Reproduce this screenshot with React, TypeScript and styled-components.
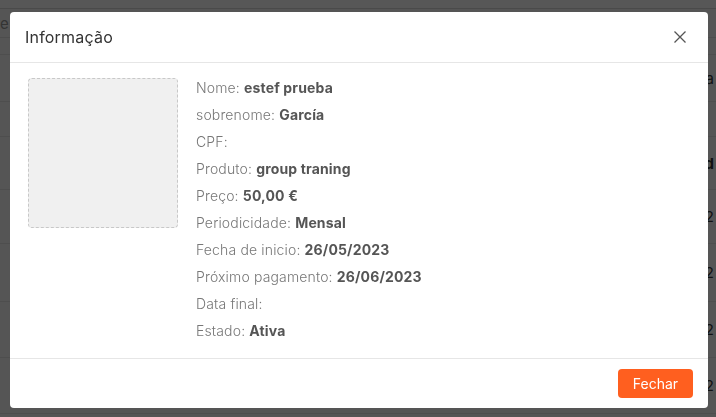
import { createGlobalStyle, styled } from 'styled-components';

const GlobalStyle = createGlobalStyle`
  html, body {
    margin: 0;
    padding: 0;
    width: 716px;
    height: 417px;
    overflow: hidden;
    background: #f4f4f4;
    font-family: Inter, 'Open Sans', sans-serif;
  }
`;

const FONT = "Inter, 'Open Sans', sans-serif";

const Page = styled.div`
  width: 716px;
  height: 417px;
  background: #fafafa;
  display: flex;
  flex-direction: column;
`;

const TopBar = styled.div`
  height: 8px;
  background: #ffffff;
  border-bottom: 1px solid #d8d8d8;
`;

const Toolbar = styled.div`
  height: 28px;
  display: flex;
  align-items: center;
  font-family: ${FONT};
  font-size: 15px;
  color: #999;
  border-bottom: 1px solid #e0e0e0;
`;

const TableRow = styled.div<{ $h: number; $bold?: boolean }>`
  height: ${(p) => p.$h}px;
  border-bottom: 1px solid #e4e4e4;
  display: flex;
  align-items: center;
  justify-content: flex-end;
  padding-right: 2px;
  font-family: ${FONT};
  font-size: 15px;
  color: #333;
  font-weight: ${(p) => (p.$bold ? 700 : 400)};
`;

const Overlay = styled.div`
  position: fixed;
  inset: 0;
  background: rgba(0, 0, 0, 0.66);
`;

const Modal = styled.div`
  position: fixed;
  left: 10px;
  top: 12px;
  width: 698px;
  height: 396px;
  background: #fff;
  border-radius: 4px;
  display: flex;
  flex-direction: column;
  font-family: ${FONT};
  overflow: hidden;
`;

const Header = styled.div`
  height: 50px;
  display: flex;
  align-items: center;
  justify-content: space-between;
  padding: 0 21px 0 15px;
  border-bottom: 1px solid #e6e6e6;
`;

const Title = styled.h4`
  margin: 0;
  font-size: 16px;
  font-weight: 400;
  letter-spacing: 0.2px;
  color: #333;
`;

const Close = styled.button`
  border: 0;
  background: none;
  padding: 0;
  width: 14px;
  height: 14px;
  display: flex;
  cursor: pointer;
`;

const Body = styled.div`
  flex: 1;
  display: flex;
  align-items: flex-start;
  gap: 18px;
  padding: 11px 18px 0 18px;
  border-bottom: 1px solid #e6e6e6;
`;

const Photo = styled.div`
  margin-top: 4px;
  width: 150px;
  height: 150px;
  box-sizing: border-box;
  background: #f0f0f0;
  border: 1px dashed #c8c8c8;
  border-radius: 4px;
  flex-shrink: 0;
`;

const Details = styled.div`
  display: flex;
  flex-direction: column;
`;

const Row = styled.div`
  height: 27px;
  line-height: 27px;
  font-size: 14px;
  font-weight: 300;
  letter-spacing: 0.15px;
  color: #777;
  white-space: nowrap;
`;

const Value = styled.b`
  font-weight: 700;
  color: #555;
`;

const Footer = styled.div`
  height: 49px;
  display: flex;
  align-items: center;
  justify-content: flex-end;
  padding: 0 15px;
`;

const Button = styled.button`
  width: 75px;
  height: 29px;
  border: 0;
  border-radius: 4px;
  background: #ff5f1f;
  color: #fff;
  font-family: ${FONT};
  font-size: 14px;
  cursor: pointer;
`;

const rows: [string, string][] = [
  ['Nome', 'estef prueba'],
  ['sobrenome', 'García'],
  ['CPF', ''],
  ['Produto', 'group traning'],
  ['Preço', '50,00 €'],
  ['Periodicidade', 'Mensal'],
  ['Fecha de inicio', '26/05/2023'],
  ['Próximo pagamento', '26/06/2023'],
  ['Data final', ''],
  ['Estado', 'Ativa'],
];

export default function App() {
  return (
    <>
      <GlobalStyle />
      <Page>
        <TopBar />
        <Toolbar>e p</Toolbar>
        <TableRow $h={16} />
        <TableRow $h={46}>Da</TableRow>
        <TableRow $h={34} />
        <TableRow $h={52} $bold>
          d
        </TableRow>
        <TableRow $h={53}>2</TableRow>
        <TableRow $h={57}>2</TableRow>
        <TableRow $h={55}>2</TableRow>
        <TableRow $h={55}>2</TableRow>
      </Page>
      <Overlay />
      <Modal role="dialog">
        <Header>
          <Title>Informação</Title>
          <Close aria-label="Fechar">
            <svg width="14" height="14" viewBox="0 0 14 14">
              <path d="M1.5 1.5 L12.5 12.5 M12.5 1.5 L1.5 12.5" stroke="#555" strokeWidth="1.3" />
            </svg>
          </Close>
        </Header>
        <Body>
          <Photo />
          <Details>
            {rows.map(([label, value]) => (
              <Row key={label}>
                {label}: {value && <Value>{value}</Value>}
              </Row>
            ))}
          </Details>
        </Body>
        <Footer>
          <Button>Fechar</Button>
        </Footer>
      </Modal>
    </>
  );
}
